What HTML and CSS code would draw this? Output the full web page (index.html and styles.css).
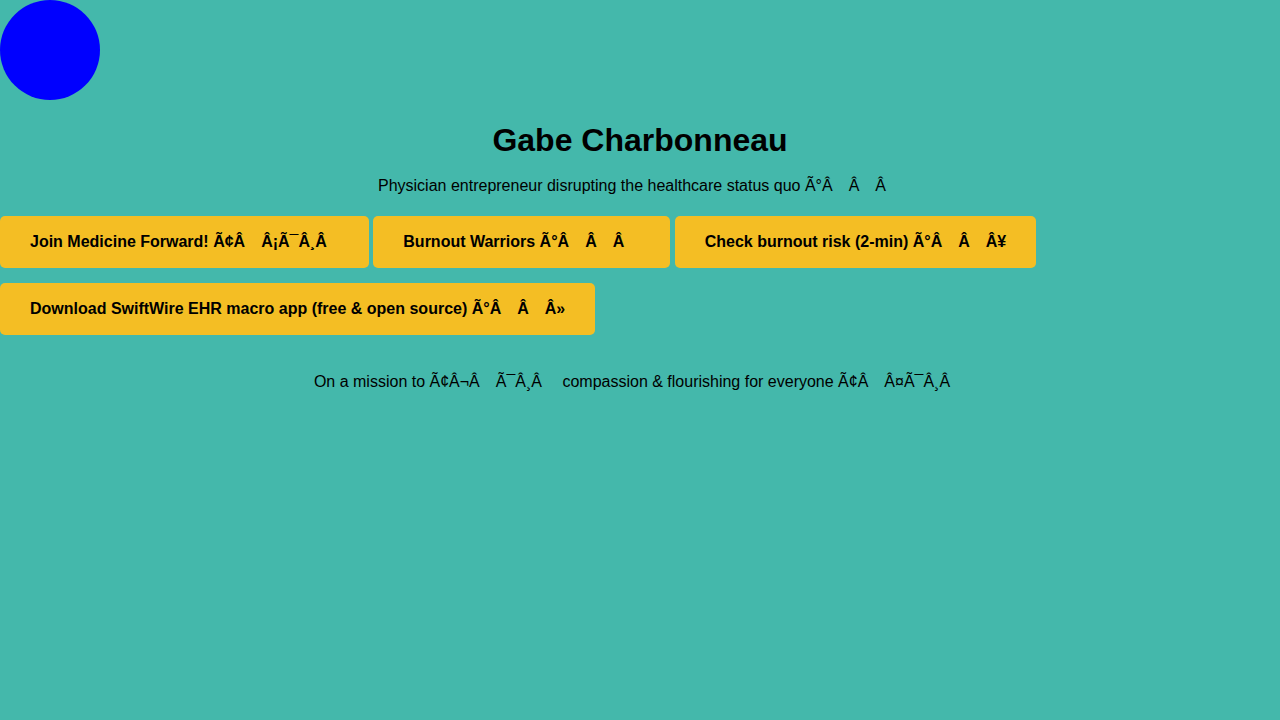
FILE: index.html
```html
<!DOCTYPE html>
<html lang="en">
<head>
<meta charset="utf-8">
<title>Gabe Charbonneau</title>
<link rel="stylesheet" href="styles.css">
</head>
<body>
<div class="avatar"></div>
<h1 class="name">Gabe Charbonneau</h1>
<p class="tagline">Physician entrepreneur disrupting the healthcare status quo Ã°Â<span class="gap"></span>Â<span class="gap"></span>Â<span class="gap"></span></p>
<div class="links"><a class="btn" href="#">Join Medicine Forward! Ã¢Â<span class="gap"></span>Â¡Ã¯Â¸Â<span class="gap gap-narrow"></span></a>
<a class="btn" href="#">Burnout Warriors Ã°Â<span class="gap"></span>Â<span class="gap"></span>Â<span class="gap"></span></a>
<a class="btn" href="#">Check burnout risk (2-min) Ã°Â<span class="gap"></span>Â<span class="gap"></span>Â¥</a>
<a class="btn" href="#">Download SwiftWire EHR macro app (free &amp; open source) Ã°Â<span class="gap"></span>Â<span class="gap"></span>Â»</a></div>
<p class="mission">On a mission to Ã¢Â¬Â<span class="gap"></span>Ã¯Â¸Â<span class="gap"></span> compassion &amp; flourishing for everyone Ã¢Â<span class="gap"></span>Â¤Ã¯Â¸Â<span class="gap"></span></p>
</body>
</html>
```
FILE: styles.css
```css
html, body {
  margin: 0;
  padding: 0;
}
body {
  background: #44b8ab;
  color: #000;
  font-family: "Liberation Sans", Arial, sans-serif;
  font-size: 16px;
}
.avatar {
  width: 100px;
  height: 100px;
  border-radius: 50%;
  background: #0000ff;
}
.name {
  text-align: center;
  font-size: 32px;
  font-weight: bold;
  margin: 22px 0 18px;
  line-height: 37px;
}
.tagline {
  text-align: center;
  margin: 0 0 21px;
  line-height: 18px;
}
.gap {
  display: inline-block;
  width: 16px;
}
.gap-narrow {
  width: 12px;
}
.links {
  margin: 0;
}
.btn {
  display: inline-block;
  background: #f4be24;
  color: #000;
  text-decoration: none;
  font-weight: bold;
  padding: 17px 30px;
  line-height: 18px;
  border-radius: 5px;
  margin-bottom: 15px;
}
.mission {
  text-align: center;
  margin: 23px 0 0;
  line-height: 18px;
}
```
